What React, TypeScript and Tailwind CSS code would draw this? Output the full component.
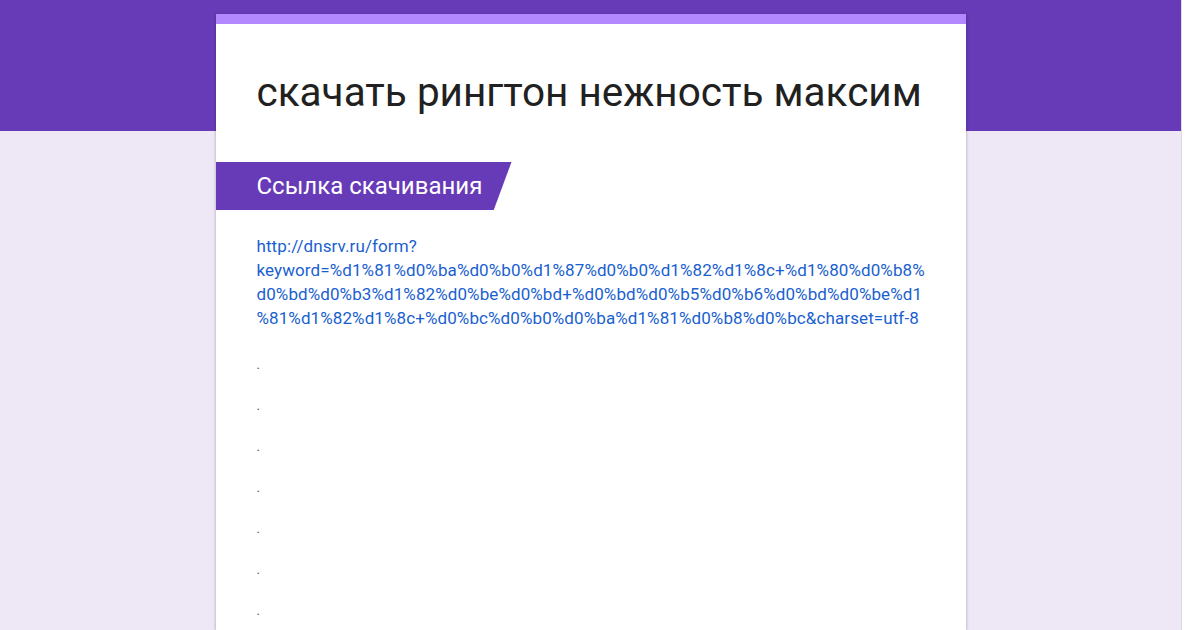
const linkLines = [
  "http://dnsrv.ru/form?",
  "keyword=%d1%81%d0%ba%d0%b0%d1%87%d0%b0%d1%82%d1%8c+%d1%80%d0%b8%",
  "d0%bd%d0%b3%d1%82%d0%be%d0%bd+%d0%bd%d0%b5%d0%b6%d0%bd%d0%be%d1",
  "%81%d1%82%d1%8c+%d0%bc%d0%b0%d0%ba%d1%81%d0%b8%d0%bc&charset=utf-8",
];

export default function App() {
  return (
    <div className="flex h-[630px] w-[1200px] overflow-hidden bg-white font-['Roboto',sans-serif]">
      <div className="h-full w-[1182px] border-r border-[#dcdcdc] bg-[linear-gradient(to_bottom,#673ab7_131px,#ede7f6_131px)] pt-[14px]">
        <div className="mx-auto h-full w-[750px] bg-white shadow-[0_1px_3px_rgba(0,0,0,0.3)] border-t-[10px] border-[#b388ff]">
          {/* Title */}
          <div className="px-[41px] pt-[44px] pb-[46px]">
            <h1 className="text-[40.5px] leading-[48px] text-[#212121]">скачать рингтон нежность максим</h1>
          </div>

          {/* Section banner */}
          <div className="h-[48px] w-[296px] bg-[#673ab7] pl-[41px] [clip-path:polygon(0_0,100%_0,94%_100%,0_100%)] flex items-center">
            <span className="text-[24px] text-white">Ссылка скачивания</span>
          </div>

          {/* Body */}
          <div className="px-[41px] pt-[24px]">
            <a className="block text-[17px] leading-[24px] tracking-[0.1px] text-[#1a5fd0]" href="#">
              {linkLines.map((l) => (
                <span key={l} className="block whitespace-nowrap">{l}</span>
              ))}
            </a>
            <div className="mt-[14px] flex flex-col">
              {[1, 2, 3, 4, 5, 6, 7].map((i) => (
                <span key={i} className="h-[41px] text-[13px] leading-[41px] text-[#555]">.</span>
              ))}
            </div>
          </div>
        </div>
      </div>
    </div>
  );
}
